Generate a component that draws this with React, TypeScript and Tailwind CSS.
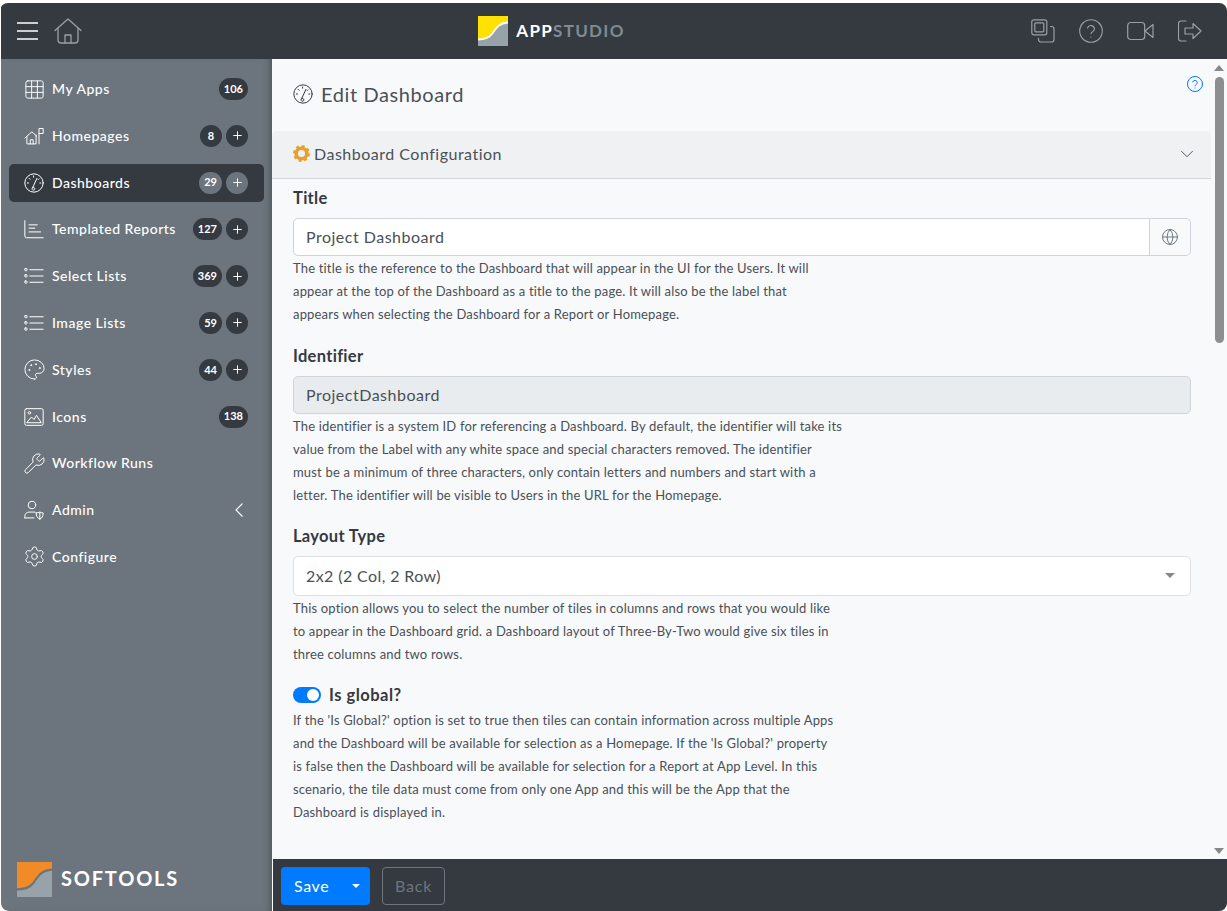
import React from 'react';
import { ChevronDown, Globe, Grid3x3, Palette, Plus, Settings, Wrench } from 'lucide-react';

const Svg = ({ children, size = 20, className = '' }: { children: React.ReactNode; size?: number; className?: string }) => (
  <svg width={size} height={size} viewBox="0 0 24 24" fill="none" stroke="currentColor" strokeWidth={1.2} strokeLinecap="round" strokeLinejoin="round" className={`shrink-0 ${className}`}>
    {children}
  </svg>
);

const GaugeIcon = ({ size = 20 }: { size?: number }) => (
  <Svg size={size}>
    <circle cx="12" cy="12" r="11" />
    <path d="M10.4 17.5 15.5 6.5M10.4 17.5a1.7 1.7 0 1 0 2.6 1.2 1.7 1.7 0 0 0-2.6-1.2Z" />
    <path d="M4 12h1.4M6.2 6.5l1 1M11.5 3.5V5M19 12h1.2M18 7l-.8.8" />
  </Svg>
);

const HelpIcon = ({ size = 24, strokeWidth = 1.1 }: { size?: number; strokeWidth?: number }) => (
  <svg width={size} height={size} viewBox="0 0 24 24" fill="none" stroke="currentColor" strokeWidth={strokeWidth} strokeLinecap="round" strokeLinejoin="round" className="shrink-0">
    <circle cx="12" cy="12" r="11.300" />
    <path d="M8.500 9a3.600 3.600 0 0 1 7 1c0 2.400-3.500 2.800-3.500 4.800" />
    <path d="M12 18v.1" />
  </svg>
);

const HomepageIcon = () => (
  <Svg>
    <path d="M1 14.5 9.5 7l5.5 5" />
    <path d="M3.5 13v8.5h11V11" />
    <path d="M7.5 21.5v-5h3.5v5" />
    <path d="M18 21.5V3h5v6h-5" />
  </Svg>
);

const ReportIcon = () => (
  <Svg>
    <path d="M1 2v18.5a2 2 0 0 0 2 2h20" />
    <path d="M6 7h10M6 11h7M6 15.500h14" />
  </Svg>
);

const ListIcon = () => (
  <Svg>
    <rect x="1" y="3" width="2.600" height="2.600" rx=".5" />
    <rect x="1" y="10.500" width="2.600" height="2.600" rx=".5" />
    <rect x="1" y="18" width="2.600" height="2.600" rx=".5" />
    <path d="M7 4.500h16M7 12h16M7 19.500h16" />
  </Svg>
);

const ImageIcon = () => (
  <Svg>
    <rect x="1" y="2" width="22" height="20" rx="2" />
    <circle cx="6.500" cy="7" r="1.500" />
    <path d="M3.500 18.500 9 12l3 3 3-5 5.500 8.500Z" />
  </Svg>
);

const AdminIcon = () => (
  <Svg>
    <circle cx="9.500" cy="6" r="4.500" />
    <path d="M1 21.500v-2a5 5 0 0 1 5-5h7" />
    <path d="M1 21.500h11" />
    <path d="M14.500 15.500c2 0 3.500-.5 4.500-1 1 .5 2.500 1 4 1 0 4-1.500 6.500-4 7.500-2.500-1-4.500-3.500-4.500-7.500Z" />
    <path d="M19 14.500V23" />
  </Svg>
);

// solid orange cog used on the section header
const GearIcon = () => (
  <svg width="17" height="17" viewBox="0 0 24 24" fill="none" stroke="#e8a02c" className="shrink-0">
    <circle cx="12" cy="12" r="7.500" strokeWidth="5" />
    <circle cx="12" cy="12" r="10" strokeWidth="4" strokeDasharray="4 3.850" />
  </svg>
);

const Logo = ({ top, line, bottom, size }: { top: string; line: string; bottom: string; size: number }) => (
  <svg width={size} height={size} viewBox="0 0 30 30" className="shrink-0">
    <rect width="30" height="30" fill={bottom} />
    <path d="M0 0h30v6c-9 1-12 6-16 12-3 4-8 5-14 5Z" fill={top} />
    <path d="M0 23.500c6 0 11-1.500 14-5.500 4-6 7-11 16-11.500" fill="none" stroke={line} strokeWidth="1.800" />
  </svg>
);

type NavItem = { label: string; icon: React.ReactNode; count?: number; add?: boolean; active?: boolean; chevron?: boolean };

const navItems: NavItem[] = [
  { label: 'My Apps', icon: <Grid3x3 size={23} strokeWidth={1} className="shrink-0" />, count: 106 },
  { label: 'Homepages', icon: <HomepageIcon />, count: 8, add: true },
  { label: 'Dashboards', icon: <GaugeIcon />, count: 29, add: true, active: true },
  { label: 'Templated Reports', icon: <ReportIcon />, count: 127, add: true },
  { label: 'Select Lists', icon: <ListIcon />, count: 369, add: true },
  { label: 'Image Lists', icon: <ListIcon />, count: 59, add: true },
  { label: 'Styles', icon: <Palette size={23} strokeWidth={1} className="shrink-0" />, count: 44, add: true },
  { label: 'Icons', icon: <ImageIcon />, count: 138 },
  { label: 'Workflow Runs', icon: <Wrench size={23} strokeWidth={1} className="shrink-0" /> },
  { label: 'Admin', icon: <AdminIcon />, chevron: true },
  { label: 'Configure', icon: <Settings size={23} strokeWidth={1} className="shrink-0" /> },
];

const SidebarRow = ({ item }: { item: NavItem }) => (
  <div className={`flex h-[38px] items-center rounded-[5px] pl-[15px] pr-[16px] ${item.active ? 'bg-[#343a40]' : ''}`}>
    <span className="mr-[8px] flex w-[20px] justify-center text-white">{item.icon}</span>
    <span className="flex-1 pb-px text-[14px] font-medium tracking-[0.5px] text-white">{item.label}</span>
    {item.count !== undefined && (
      <span className={`flex h-[22px] min-w-[22px] items-center justify-center rounded-full px-[5px] text-[11px] font-bold text-white ${item.active ? 'bg-[#6c757d]' : 'bg-[#343a40]'}`}>
        {item.count}
      </span>
    )}
    {item.add && (
      <span className={`ml-[4px] flex h-[22px] w-[22px] items-center justify-center rounded-full text-white ${item.active ? 'bg-[#6c757d]' : 'bg-[#343a40]'}`}>
        <Plus size={13} strokeWidth={1.8} />
      </span>
    )}
    {item.chevron && (
      <svg width="10" height="16" viewBox="0 0 10 16" fill="none" stroke="white" strokeWidth="1.100" className="mr-[4px]">
        <path d="M8.500 1.500 2 8l6.500 6.500" />
      </svg>
    )}
  </div>
);

const Help = ({ lines, className = '' }: { lines: string[]; className?: string }) => (
  <div className={`text-[13px] leading-[23px] tracking-[0.18px] text-[#495057] ${className}`}>
    {lines.map((line) => (
      <div key={line} className="whitespace-nowrap">{line}</div>
    ))}
  </div>
);

const labelClass = 'block text-[16.500px] font-bold leading-[22px] tracking-[0.3px] text-[#343a40]';

export default function App() {
  return (
    <div className="h-[911px] w-[1227px] overflow-hidden bg-white pt-[3px] font-['Lato','Liberation_Sans',sans-serif]">
      <div className="flex h-[908px] flex-col overflow-hidden rounded-[8px] pl-px">
        {/* Top bar */}
        <header className="flex h-[56px] shrink-0 items-center justify-between bg-[#343a40] pl-[16px] pr-[25px]">
          <div className="flex w-[300px] items-center gap-[16px]">
            <svg width="21" height="18" viewBox="0 0 21 18" fill="none" stroke="white" strokeWidth="1.600">
              <path d="M0 1h21M0 9h21M0 17h21" />
            </svg>
            <svg width="28" height="26" viewBox="0 0 28 26" fill="none" stroke="#9aa0a6" strokeWidth="1.300" strokeLinejoin="round" strokeLinecap="round">
              <path d="M1 12.500 14 1l13 11.500" />
              <path d="M4 10.500V22a3 3 0 0 0 3 3h14a3 3 0 0 0 3-3V10.500" />
              <path d="M11 25v-8h6v8" />
            </svg>
          </div>
          <div className="flex items-center gap-[8px]">
            <Logo size={30} top="#ffe100" line="#ffffff" bottom="#98a2a9" />
            <span className="text-[17px] font-bold tracking-[1.300px] text-white">
              APP<span className="text-[#7f8b93]">STUDIO</span>
            </span>
          </div>
          <div className="flex w-[416px] items-center justify-end gap-[24px] text-[#9aa0a6]">
            <svg width="24" height="24" viewBox="0 0 24 24" fill="none" stroke="currentColor" strokeWidth="1.200">
              <rect x="0.800" y="0.800" width="15" height="15" rx="2" />
              <rect x="3.800" y="3.800" width="9" height="9" rx="1" />
              <path d="M19 7.500h1.500a2.500 2.500 0 0 1 2.500 2.500v10.500a2.500 2.500 0 0 1-2.500 2.500H10a2.500 2.500 0 0 1-2.500-2.500V19" />
            </svg>
            <HelpIcon />
            <svg width="27" height="20" viewBox="0 0 27 20" fill="none" stroke="currentColor" strokeWidth="1.200" strokeLinejoin="round">
              <rect x="0.700" y="1.500" width="17" height="17" rx="3" />
              <path d="M18 10 26 3.500v13Z" />
            </svg>
            <svg width="24" height="22" viewBox="0 0 24 22" fill="none" stroke="currentColor" strokeWidth="1.200" strokeLinejoin="round" strokeLinecap="round">
              <path d="M8 1H3a2.500 2.500 0 0 0-2.500 2.500v15A2.500 2.500 0 0 0 3 21h5" />
              <path d="M7 8h8V3.500l8 7.500-8 7.500V14H7Z" />
            </svg>
          </div>
        </header>

        <div className="flex min-h-0 flex-1">
          {/* Sidebar */}
          <aside className="relative z-10 flex w-[271px] shrink-0 flex-col justify-between rounded-bl-[8px] bg-[#6c757d] pb-[14px] pl-[8px] pr-[8px] pt-[11px] shadow-[inset_-6px_0_6px_-4px_rgba(52,58,64,0.55)]">
            <nav className="flex flex-col gap-[8.800px]">
              {navItems.map((item) => (
                <SidebarRow key={item.label} item={item} />
              ))}
            </nav>
            <div className="flex items-center gap-[9px] pl-[8px]">
              <Logo size={35} top="#f28a25" line="#6c757d" bottom="#98a2a9" />
              <span className="mb-[3px] text-[20px] font-bold tracking-[1.800px] text-white">SOFTOOLS</span>
            </div>
          </aside>

          {/* Main */}
          <div className="flex min-w-0 flex-1 flex-col">
            <div className="flex min-h-0 flex-1 bg-[#f8f9fa]">
              <main className="relative min-w-0 flex-1 overflow-hidden">
                <div className="flex h-[72px] items-center gap-[8px] pb-[2px] pl-[21px]">
                  <span className="text-[#343a40]"><GaugeIcon size={20} /></span>
                  <h1 className="text-[20px] font-normal tracking-[0.6px] text-[#495057]">Edit Dashboard</h1>
                </div>
                <div className="absolute right-[8px] top-[17px] text-[#007bff]">
                  <HelpIcon size={16} strokeWidth={1.500} />
                </div>

                <div className="flex h-[48px] items-center justify-between rounded-t-[5px] border-b border-[#d3d6d9] bg-[#f0f1f3] pb-[2px] pl-[21px] pr-[13px]">
                  <div className="flex items-center gap-[4px]">
                    <GearIcon />
                    <span className="text-[16px] tracking-[0.5px] text-[#495057]">Dashboard Configuration</span>
                  </div>
                  <ChevronDown size={22} strokeWidth={1} className="text-[#495057]" />
                </div>

                <div className="pl-[21px] pr-[20px] pt-[8px]">
                  <label className={labelClass}>Title</label>
                  <div className="mt-[9px] flex h-[38px] rounded-[5px] border border-[#ced4da]">
                    <div className="flex flex-1 items-center rounded-l-[5px] bg-white pl-[12px] text-[16px] tracking-[0.5px] text-[#495057]">Project Dashboard</div>
                    <div className="flex w-[41px] items-center justify-center rounded-r-[5px] border-l border-[#ced4da] bg-[#f8f9fa] text-[#6c757d]">
                      <Globe size={18} strokeWidth={1.300} />
                    </div>
                  </div>
                  <Help
                    className="mt-[1px]"
                    lines={[
                      'The title is the reference to the Dashboard that will appear in the UI for the Users. It will',
                      'appear at the top of the Dashboard as a title to the page. It will also be the label that',
                      'appears when selecting the Dashboard for a Report or Homepage.',
                    ]}
                  />

                  <label className={`mt-[19px] ${labelClass}`}>Identifier</label>
                  <div className="mt-[9px] flex h-[38px] items-center rounded-[5px] border border-[#ced4da] bg-[#e9ecef] pl-[12px] text-[16px] tracking-[0.5px] text-[#495057]">ProjectDashboard</div>
                  <Help
                    className="mt-[1px]"
                    lines={[
                      'The identifier is a system ID for referencing a Dashboard. By default, the identifier will take its',
                      'value from the Label with any white space and special characters removed. The identifier',
                      'must be a minimum of three characters, only contain letters and numbers and start with a',
                      'letter. The identifier will be visible to Users in the URL for the Homepage.',
                    ]}
                  />

                  <label className={`mt-[18px] ${labelClass}`}>Layout Type</label>
                  <div className="mt-[9px] flex h-[40px] items-center justify-between rounded-[5px] border border-[#dfe2e5] bg-white pb-px pl-[12px] pr-[15px] text-[16px] tracking-[0.4px] text-[#495057]">
                    2x2 (2 Col, 2 Row)
                    <span className="h-0 w-0 border-x-[5px] border-t-[5px] border-x-transparent border-t-[#888]" />
                  </div>
                  <Help
                    className="mt-[1px]"
                    lines={[
                      'This option allows you to select the number of tiles in columns and rows that you would like',
                      'to appear in the Dashboard grid. a Dashboard layout of Three-By-Two would give six tiles in',
                      'three columns and two rows.',
                    ]}
                  />

                  <div className="mt-[18px] flex h-[22px] items-center gap-[8px]">
                    <span className="flex h-[16px] w-[28px] items-center justify-end rounded-full bg-[#007bff] pr-[2px]">
                      <span className="h-[12px] w-[12px] rounded-full bg-white" />
                    </span>
                    <span className="text-[16.500px] font-bold tracking-[0.5px] text-[#343a40]">Is global?</span>
                  </div>
                  <Help
                    className="mt-[3px]"
                    lines={[
                      "If the 'Is Global?' option is set to true then tiles can contain information across multiple Apps",
                      "and the Dashboard will be available for selection as a Homepage. If the 'Is Global?' property",
                      'is false then the Dashboard will be available for selection for a Report at App Level. In this',
                      'scenario, the tile data must come from only one App and this will be the App that the',
                      'Dashboard is displayed in.',
                    ]}
                  />
                </div>
              </main>

              {/* Scrollbar */}
              <div className="flex w-[16px] shrink-0 flex-col items-center bg-[#f8f9fa] pb-[5px] pt-[6px]">
                <span className="h-0 w-0 border-x-[5px] border-b-[6px] border-x-transparent border-b-[#888]" />
                <span className="mt-[6px] h-[266px] w-[9px] rounded-full bg-[#8e8e8e]" />
                <span className="mt-auto h-0 w-0 border-x-[5px] border-t-[6px] border-x-transparent border-t-[#888]" />
              </div>
            </div>

            {/* Footer */}
            <footer className="flex h-[52px] shrink-0 items-start gap-[12px] border-l border-white bg-[#343a40] pl-[8px] pt-[8px]">
              <div className="flex h-[38px] w-[89px] items-center justify-between rounded-[4px] bg-[#007bff] pl-[13px] pr-[10px] text-[16px] tracking-[0.6px] text-white">
                Save
                <span className="h-0 w-0 border-x-[4px] border-t-[4px] border-x-transparent border-t-white" />
              </div>
              <div className="flex h-[38px] w-[63px] items-center justify-center rounded-[4px] border border-[#6c757d] text-[16px] tracking-[0.8px] text-[#6c757d]">Back</div>
            </footer>
          </div>
        </div>
      </div>
    </div>
  );
}
